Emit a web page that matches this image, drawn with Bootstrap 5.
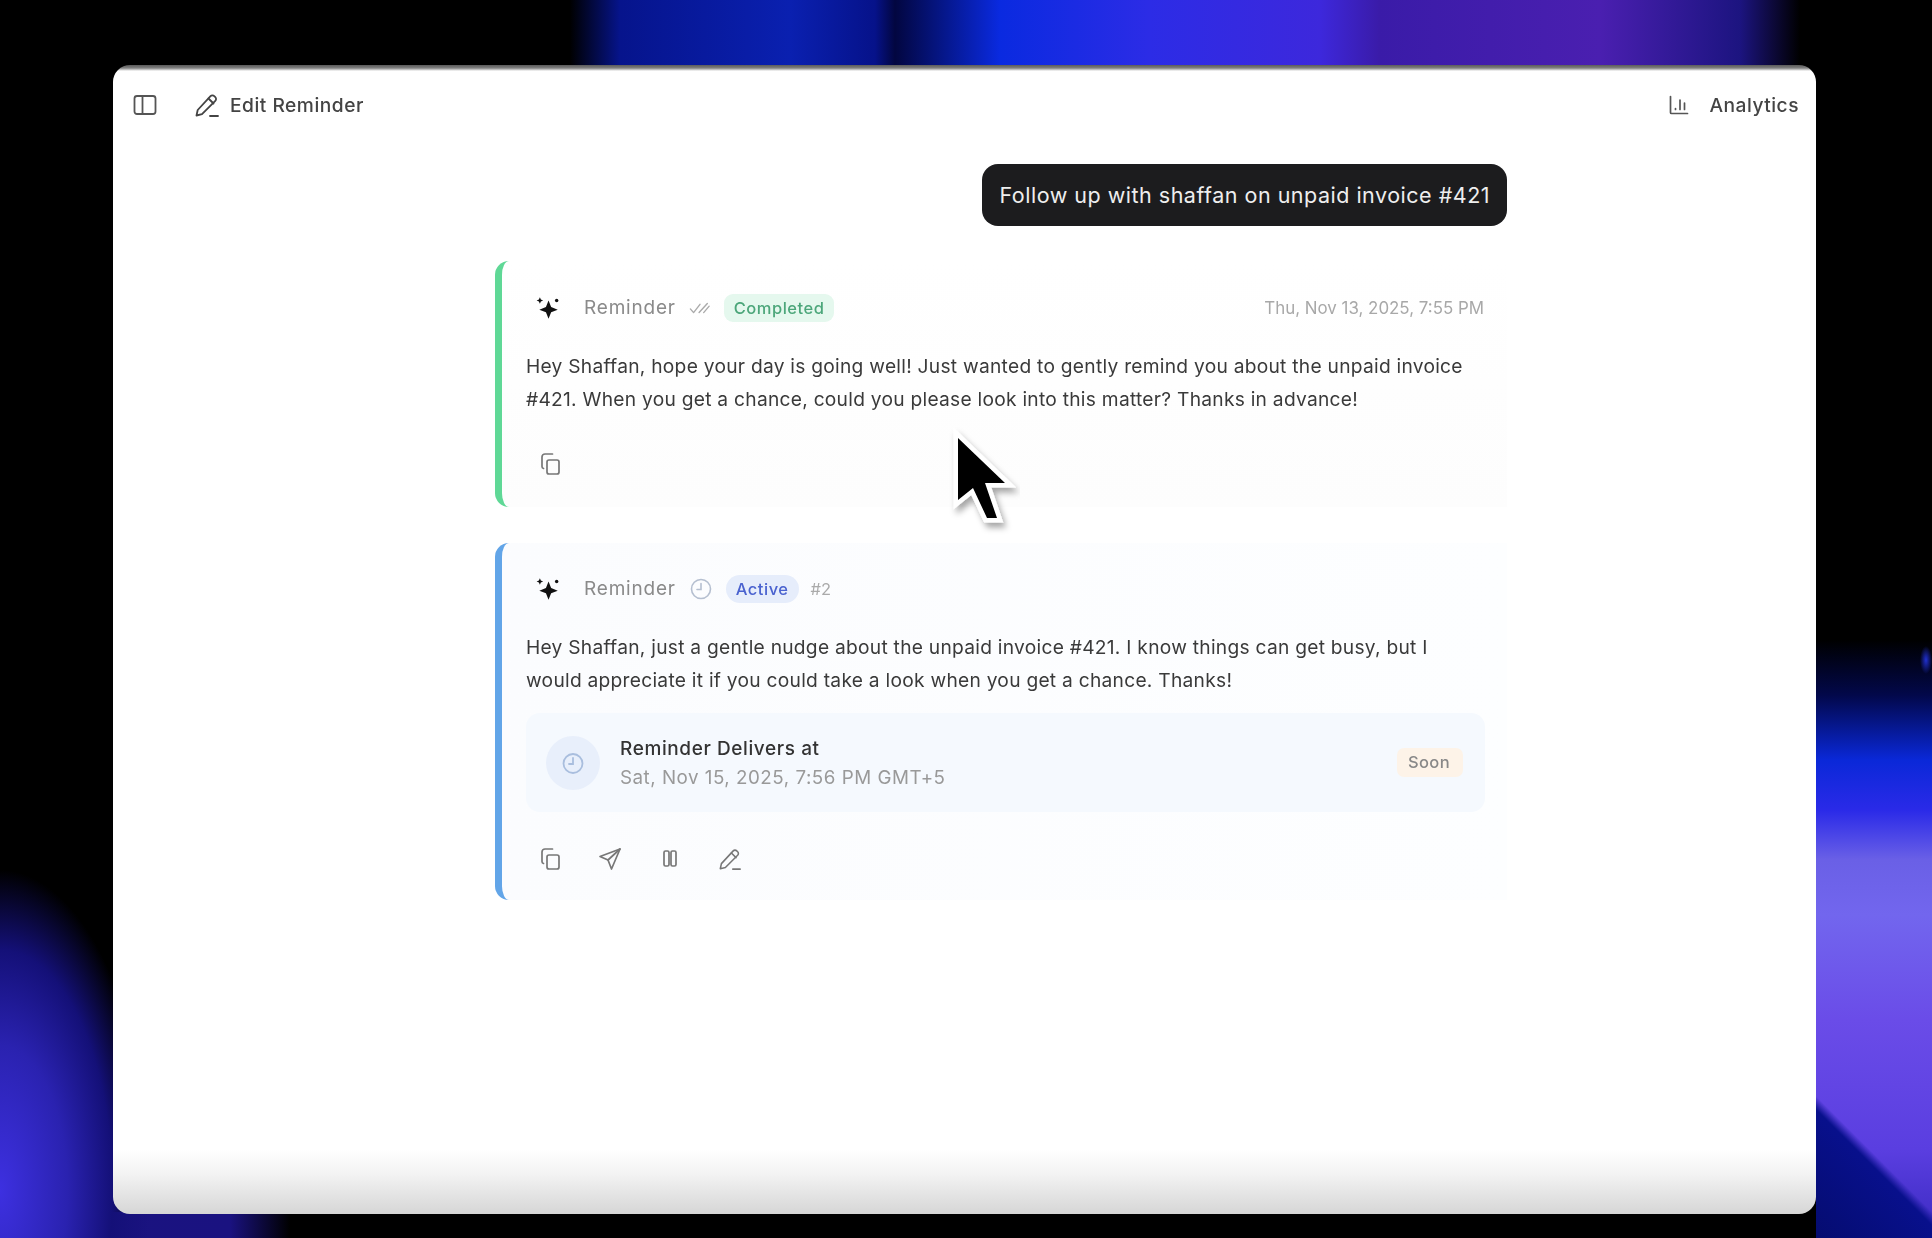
<!DOCTYPE html>
<html lang="en">
<head>
<meta charset="utf-8">
<title>Edit Reminder</title>
<link href="https://cdn.jsdelivr.net/npm/bootstrap@5.3.0/dist/css/bootstrap.min.css" rel="stylesheet">
<style>
html,body{height:100%}
body{margin:0;overflow:hidden;position:relative;font-family:Inter,"Liberation Sans",sans-serif;color:#333;padding:65px 116px 24px 113px;
background-color:#000;
background-image:
 linear-gradient(90deg,#000 0,#000 570px,#06148c 620px,#0a20b0 790px,#06128a 875px,#020640 895px,#0a2ae0 1000px,#2c2ce6 1150px,#3d28dc 1320px,#3a1ba8 1380px,#4a1fb0 1600px,#1c1480 1740px,#000 1800px),
 radial-gradient(ellipse 6px 14px at 110px 60px,#2030d0 0,transparent 100%),
 linear-gradient(225deg,transparent 89.500%,#08108c 90.500%,#050c70 100%),
 linear-gradient(180deg,#000 0,#000 640px,#02084a 695px,#0a28d8 760px,#2a2ae8 810px,#6a60e6 860px,#7266ee 915px,#6a4ce8 1020px,#5a3ee0 1150px,#3a2ac0 1238px),
 radial-gradient(ellipse 150px 320px at 0 1190px,#3d30e0 0,#2a22b0 45%,#141078 75%,transparent 100%),
 linear-gradient(90deg,#1a1480 0,#1a1280 230px,#000 290px,#000 1932px);
background-size:100% 66px,116px 120px,116px 100%,116px 100%,100% 100%,100% 26px;
background-position:0 0,right 0 top 600px,right 0 top 0,right 0 top 0,0 0,0 100%;
background-repeat:no-repeat}
.app-window{width:1703px;height:1149px;border-radius:17px;overflow:hidden;position:relative;display:flex;flex-direction:column;background-image:linear-gradient(180deg,#5a5a5a 0,#808080 3px,#fff 6px,#fff 1085px,#f2f2f2 1110px,#d6d6d6 1149px)}
.top-row{height:80px;padding:0 17px 0 20px;flex:none}
.top-label{font-size:19.2px;font-weight:500;color:#444;letter-spacing:.5px}
.thread{width:1012px;margin-left:382px}
.bubble-msg{background:#1c1c1e;color:#eee;font-size:21.5px;letter-spacing:.5px;padding:0 17px;height:62px;border-radius:16px;margin-top:19px;margin-bottom:35px;white-space:nowrap}
.note-card{border:0;border-left:7px solid;border-radius:14px 0 0 14px;padding:24px 22px 0 24px;background:#fdfdfd}
.note-green{border-left-color:#5fd896;height:246px;margin-bottom:36px;background:linear-gradient(180deg,#fff,#fdfdfd)}
.note-blue{border-left-color:#62a5e8;height:357px;background:linear-gradient(90deg,#fbfcfe 0,#fdfeff 100%);padding-top:23px}
.note-head{height:46px}
.spark-mark{margin-left:9px;margin-right:-1px}
.note-name{font-size:19px;letter-spacing:.8px;color:#8a8a8a;margin-left:24px;margin-top:1px}
.state-mark{margin:0 13px}
.state-pill{font-size:16.5px;letter-spacing:.5px;font-weight:500;height:28px;padding:0 10px;border-radius:9px;display:inline-flex;align-items:center}
.pill-green{background:#e5f8ee;color:#4ca67a}
.pill-blue{background:#e6edfb;color:#4a62cf;border-radius:14px}
.pill-num{font-size:16.5px;color:#aaa;margin-left:12px}
.note-date{font-size:16.9px;color:#a8a8a8;margin:1px 1px 0 auto}
.note-text{font-size:19.2px;letter-spacing:.26px;line-height:33.3px;color:#3a3a3a;margin:19px 0 0 0;height:67px}
.deliver-box{height:99px;background:#f5f9fe;border-radius:14px;margin-top:15px;padding:0 22px 0 20px}
.clock-disc{width:54px;height:54px;border-radius:50%;background:#e8effb;flex:none;margin-right:20px}
.deliver-title{font-size:19px;letter-spacing:.6px;font-weight:500;color:#333;line-height:29px}
.deliver-when{font-size:18.8px;letter-spacing:.5px;color:#999;line-height:29px}
.soon-pill{background:#fdf3e8;color:#888;font-size:16.5px;letter-spacing:.4px;font-weight:500;padding:2px 13px 2px 11px;border-radius:7px}
.action-row{gap:36px;padding-left:12px}
.action-row .btn{width:24px;height:24px;padding:0;border:0;display:flex;align-items:center;justify-content:center}
.acts-one{margin-top:35px}
.acts-two{margin-top:35px}
.soft{filter:blur(.5px)}
.head-pencil{margin:0 10px 0 37px}
.pointer-mark{position:absolute;left:945px;top:425px;width:80px;height:110px;pointer-events:none}
</style>
</head>
<body>
<div class="app-window">
  <div class="top-row d-flex align-items-center justify-content-between soft">
    <div class="d-flex align-items-center">
      <svg width="24" height="22" viewBox="0 0 24 22" fill="none" stroke="#555" stroke-width="1.8"><rect x="1.5" y="2" width="21" height="18" rx="2.5"/><path d="M9.5 2v18"/></svg>
      <svg class="head-pencil" width="26" height="26" viewBox="0 0 26 26" fill="none" stroke="#444" stroke-width="1.8" stroke-linecap="round" stroke-linejoin="round"><path d="M2.5 23.5l1.2-5.5L16.500 4.200a2.600 2.600 0 0 1 3.800 0l1 1a2.600 2.600 0 0 1 0 3.700L8 22.200z"/><path d="M14.500 6.500l5 5"/><path d="M16 24h8"/></svg>
      <span class="top-label">Edit Reminder</span>
    </div>
    <div class="d-flex align-items-center">
      <svg width="20" height="20" viewBox="0 0 20 20" fill="none" stroke="#555" stroke-width="1.7" stroke-linecap="round"><path d="M1.5 1.5v16a1 1 0 0 0 1 1h16"/><path d="M6.5 13.5v1M11 5v9.500M15.500 8v6.500"/></svg>
      <span class="top-label" style="margin-left:20px">Analytics</span>
    </div>
  </div>
  <div class="thread soft">
    <div class="d-flex justify-content-end">
      <div class="bubble-msg d-flex align-items-center">Follow up with shaffan on unpaid invoice #421</div>
    </div>

    <div class="card note-card note-green">
      <div class="note-head d-flex align-items-center">
        <svg class="spark-mark" width="26" height="26" viewBox="0 0 24 24" fill="#111"><path d="M12.500 5l2.400 6.100 6.100 2.400-6.100 2.400-2.400 6.100-2.400-6.100-6.100-2.400 6.100-2.400z"/><path d="M4.500 2l.9 2.100 2.100.9-2.100.9-.9 2.100-.9-2.100-2.100-.9 2.100-.9z"/><circle cx="20" cy="5" r="1.600"/></svg>
        <span class="note-name">Reminder</span>
        <svg class="state-mark" width="22" height="14" viewBox="0 0 24 14" fill="none" stroke="#aaa" stroke-width="1.500" stroke-linecap="round" stroke-linejoin="round"><path d="M1.500 8l3.500 4 7-9"/><path d="M11 12l9-10M16 12l6-7"/></svg>
        <span class="state-pill pill-green">Completed</span>
        <span class="note-date">Thu, Nov 13, 2025, 7:55 PM</span>
      </div>
      <p class="note-text">Hey Shaffan, hope your day is going well! Just wanted to gently remind you about the unpaid invoice #421. When you get a chance, could you please look into this matter? Thanks in advance!</p>
      <div class="d-flex action-row acts-one">
        <button class="btn" type="button" aria-label="Copy"><svg width="24" height="24" viewBox="0 0 24 24" fill="none" stroke="#777" stroke-width="1.700" stroke-linecap="round" stroke-linejoin="round"><rect x="9" y="8" width="12" height="14" rx="2"/><path d="M5.500 16.500A2 2 0 0 1 4 14.500V5a3 3 0 0 1 3-3h7.500"/></svg></button>
      </div>
    </div>

    <div class="card note-card note-blue">
      <div class="note-head d-flex align-items-center">
        <svg class="spark-mark" width="26" height="26" viewBox="0 0 24 24" fill="#111"><path d="M12.500 5l2.400 6.100 6.100 2.400-6.100 2.400-2.400 6.100-2.400-6.100-6.100-2.400 6.100-2.400z"/><path d="M4.500 2l.9 2.100 2.100.9-2.100.9-.9 2.100-.9-2.100-2.100-.9 2.100-.9z"/><circle cx="20" cy="5" r="1.600"/></svg>
        <span class="note-name">Reminder</span>
        <svg class="state-mark" width="24" height="24" viewBox="0 0 24 24" fill="none" stroke="#b5bfd0" stroke-width="1.600" stroke-linecap="round"><circle cx="12" cy="12" r="9.500"/><path d="M12 6.500V12.500H8"/></svg>
        <span class="state-pill pill-blue">Active</span>
        <span class="pill-num">#2</span>
      </div>
      <p class="note-text">Hey Shaffan, just a gentle nudge about the unpaid invoice #421. I know things can get busy, but I would appreciate it if you could take a look when you get a chance. Thanks!</p>
      <div class="deliver-box d-flex align-items-center">
        <div class="clock-disc d-flex align-items-center justify-content-center">
          <svg width="24" height="24" viewBox="0 0 24 24" fill="none" stroke="#a9bede" stroke-width="1.800" stroke-linecap="round"><circle cx="12" cy="12.500" r="9.500"/><path d="M12 7v6H8"/></svg>
        </div>
        <div class="flex-grow-1">
          <div class="deliver-title">Reminder Delivers at</div>
          <div class="deliver-when">Sat, Nov 15, 2025, 7:56 PM GMT+5</div>
        </div>
        <span class="soon-pill">Soon</span>
      </div>
      <div class="d-flex action-row acts-two">
        <button class="btn" type="button" aria-label="Copy"><svg width="24" height="24" viewBox="0 0 24 24" fill="none" stroke="#777" stroke-width="1.700" stroke-linecap="round" stroke-linejoin="round"><rect x="9" y="8" width="12" height="14" rx="2"/><path d="M5.500 16.500A2 2 0 0 1 4 14.500V5a3 3 0 0 1 3-3h7.500"/></svg></button>
        <button class="btn" type="button" aria-label="Send"><svg width="24" height="24" viewBox="0 0 24 24" fill="none" stroke="#777" stroke-width="1.700" stroke-linecap="round" stroke-linejoin="round"><path d="M22 2L2 9.500l8 3.500 3.500 9z"/><path d="M10 13L22 2"/></svg></button>
        <button class="btn" type="button" aria-label="Pause"><svg width="24" height="24" viewBox="0 0 24 24" fill="none" stroke="#777" stroke-width="1.700"><rect x="6" y="4" width="5" height="15" rx="1.500"/><rect x="13" y="4" width="5" height="15" rx="1.500"/></svg></button>
        <button class="btn" type="button" aria-label="Edit"><svg width="26" height="26" viewBox="0 0 26 26" fill="none" stroke="#777" stroke-width="1.700" stroke-linecap="round" stroke-linejoin="round"><path d="M2.500 23.500l1.200-5.500L16.500 4.200a2.600 2.600 0 0 1 3.800 0l1 1a2.600 2.600 0 0 1 0 3.700L8 22.200z"/><path d="M14.500 6.500l5 5"/><path d="M16 24h8"/></svg></button>
      </div>
    </div>
  </div>
</div>
<svg class="pointer-mark" viewBox="0 0 80 110" aria-hidden="true">
  <defs><filter id="ps" x="-30%" y="-30%" width="160%" height="160%"><feDropShadow dx="3" dy="5" stdDeviation="3" flood-color="#000" flood-opacity=".35"/></filter></defs>
  <path d="M13 13L60 58H40L52 93H42L28 63L13 75Z" fill="#000" stroke="#fff" stroke-width="9" stroke-linejoin="miter" paint-order="stroke" filter="url(#ps)"/>
</svg>
<script src="https://cdn.jsdelivr.net/npm/bootstrap@5.3.0/dist/js/bootstrap.bundle.min.js"></script>
</body>
</html>
